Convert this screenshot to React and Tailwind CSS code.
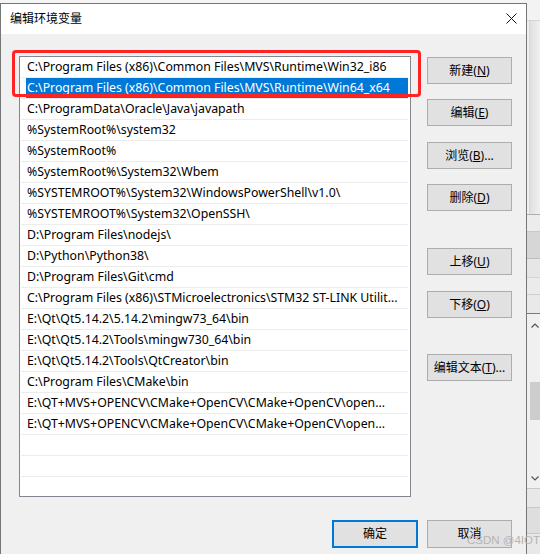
const FONT = "font-['Noto_Sans','Noto_Sans_CJK_SC',sans-serif]";

const rows = [
  "C:\\Program Files (x86)\\Common Files\\MVS\\Runtime\\Win32_i86",
  "C:\\Program Files (x86)\\Common Files\\MVS\\Runtime\\Win64_x64",
  "C:\\ProgramData\\Oracle\\Java\\javapath",
  "%SystemRoot%\\system32",
  "%SystemRoot%",
  "%SystemRoot%\\System32\\Wbem",
  "%SYSTEMROOT%\\System32\\WindowsPowerShell\\v1.0\\",
  "%SYSTEMROOT%\\System32\\OpenSSH\\",
  "D:\\Program Files\\nodejs\\",
  "D:\\Python\\Python38\\",
  "D:\\Program Files\\Git\\cmd",
  "C:\\Program Files (x86)\\STMicroelectronics\\STM32 ST-LINK Utilit...",
  "E:\\Qt\\Qt5.14.2\\5.14.2\\mingw73_64\\bin",
  "E:\\Qt\\Qt5.14.2\\Tools\\mingw730_64\\bin",
  "E:\\Qt\\Qt5.14.2\\Tools\\QtCreator\\bin",
  "C:\\Program Files\\CMake\\bin",
  "E:\\QT+MVS+OPENCV\\CMake+OpenCV\\CMake+OpenCV\\open...",
  "E:\\QT+MVS+OPENCV\\CMake+OpenCV\\CMake+OpenCV\\open...",
  "",
  "",
  "",
];

function Btn({ children, className = "" }) {
  return (
    <div
      className={
        "h-[27px] w-[85px] shrink-0 bg-[#e1e1e1] border border-[#adadad] flex items-center justify-center text-[12px] text-black leading-none " +
        className
      }
    >
      {children}
    </div>
  );
}

function Row({ text, selected }) {
  return (
    <div className="h-[21px] shrink-0 border-b border-[#ececec] ml-[1px] mr-[2px] flex items-stretch overflow-hidden">
      {selected ? (
        <div className="ml-[5px] flex-1 bg-[#0078d7] text-white pl-[1px] pt-[1px] flex items-center whitespace-nowrap text-[12.3px]">
          {text}
        </div>
      ) : (
        <div className="pl-[6px] pt-[1px] flex-1 flex items-center whitespace-nowrap text-[12.3px] text-black">
          {text}
        </div>
      )}
    </div>
  );
}

export default function App() {
  return (
    <div className={"relative w-[540px] h-[554px] overflow-hidden flex bg-[#f0f0f0] " + FONT}>
      {/* dialog */}
      <div className="w-[527px] shrink-0 flex flex-col">
        <div className="h-[3px] bg-[#f4f4f4]" />
        <div className="flex-1 flex flex-col border-l border-t border-r border-[#767676]">
          {/* title bar */}
          <div className="h-[30px] bg-white flex items-center justify-between pl-[9px] pr-[9px]">
            <span className="text-[12px] text-black">编辑环境变量</span>
            <svg width="11" height="11" viewBox="0 0 11 11" className="mb-[1px]">
              <path d="M0.5 0.5 L10.5 10.5 M10.5 0.5 L0.5 10.5" stroke="#111" strokeWidth="1" />
            </svg>
          </div>
          {/* content */}
          <div className="flex-1 bg-[#f0f0f0] pt-[22px] pl-[18px] pr-[14px]">
            <div className="flex gap-[16px]">
              <div className="w-[392px] h-[441px] bg-white border border-[#82878f] flex flex-col overflow-hidden">
                {rows.map((t, i) => (
                  <Row key={i} text={t} selected={i === 1} />
                ))}
              </div>
              <div className="flex flex-col pt-[1px]">
                <Btn>
                  新建(<u>N</u>)
                </Btn>
                <Btn className="mt-[15px]">
                  编辑(<u>E</u>)
                </Btn>
                <Btn className="mt-[16px]">
                  浏览(<u>B</u>)...
                </Btn>
                <Btn className="mt-[15px]">
                  删除(<u>D</u>)
                </Btn>
                <Btn className="mt-[37px]">
                  上移(<u>U</u>)
                </Btn>
                <Btn className="mt-[16px]">
                  下移(<u>O</u>)
                </Btn>
                <Btn className="mt-[36px]">
                  编辑文本(<u>T</u>)...
                </Btn>
              </div>
            </div>
            <div className="mt-[23px] flex justify-end gap-[9px]">
              <div className="h-[28px] w-[86px] bg-[#e1e1e1] border-2 border-[#0078d7] flex items-center justify-center text-[12px] text-black">
                确定
              </div>
              <div className="h-[28px] w-[85px] bg-[#e1e1e1] border border-[#adadad] flex items-center justify-center text-[12px] text-black">
                取消
              </div>
            </div>
          </div>
        </div>
      </div>

      {/* background window strip on the right */}
      <div className="flex-1 flex flex-col">
        <div className="h-[20px] bg-[#f3f3f3]" />
        <div className="h-[1px] bg-[#d4d4d4]" />
        <div className="h-[193px] bg-linear-to-r from-[#e0e0e0] to-[#f0f0f0] border-l border-[#d6d6d6] ml-[2px]" />
        <div className="h-[1px] bg-[#a9b0b8]" />
        <div className="h-[16px] bg-[#ececec]" />
        <div className="h-[1px] bg-[#c8c8c8]" />
        <div className="h-[26px] bg-[#d6d6d6]" />
        <div className="h-[1px] bg-[#bdbdbd]" />
        <div className="h-[18px] bg-[#e6e6e6]" />
        <div className="h-[1px] bg-[#d6d6d6]" />
        <div className="h-[16px] bg-[#ebebeb]" />
        <div className="h-[1px] bg-[#cfcfcf]" />
        <div className="h-[18px] bg-[#e9e9e9]" />
        <div className="h-[1px] bg-[#7a7a7a]" />
        <div className="h-[174px] bg-[#f0f0f0] flex flex-col">
          <div className="pt-[9px] pl-[4px]">
            <svg width="8" height="5" viewBox="0 0 8 5">
              <path d="M0.5 4.5 L4 1 L7.5 4.5" stroke="#555" strokeWidth="1.2" fill="none" />
            </svg>
          </div>
          <div className="mt-[54px] ml-[3px] h-[38px] bg-[#cdcdcd]" />
          <div className="mt-[56px] pl-[4px]">
            <svg width="8" height="5" viewBox="0 0 8 5">
              <path d="M0.5 0.5 L4 4 L7.5 0.5" stroke="#555" strokeWidth="1.2" fill="none" />
            </svg>
          </div>
        </div>
        <div className="h-[1px] bg-[#c8c8c8]" />
        <div className="h-[18px] bg-[#e8e8e8]" />
        <div className="h-[1px] bg-[#c8c8c8]" />
        <div className="h-[25px] bg-[#dedede]" />
        <div className="h-[1px] bg-[#c8c8c8]" />
        <div className="flex-1 bg-[#e8e8e8]" />
      </div>

      {/* red annotation box */}
      <div className="absolute left-[12px] top-[50px] w-[409px] h-[47px] border-[3px] border-[#ff2424] rounded-[4px]" />

      {/* watermark */}
      <div className="absolute left-[467px] top-[532px] text-[11.5px] text-[#b5b5b5] font-['Liberation_Sans',sans-serif] whitespace-nowrap">
        CSDN @4IOT
      </div>
    </div>
  );
}
